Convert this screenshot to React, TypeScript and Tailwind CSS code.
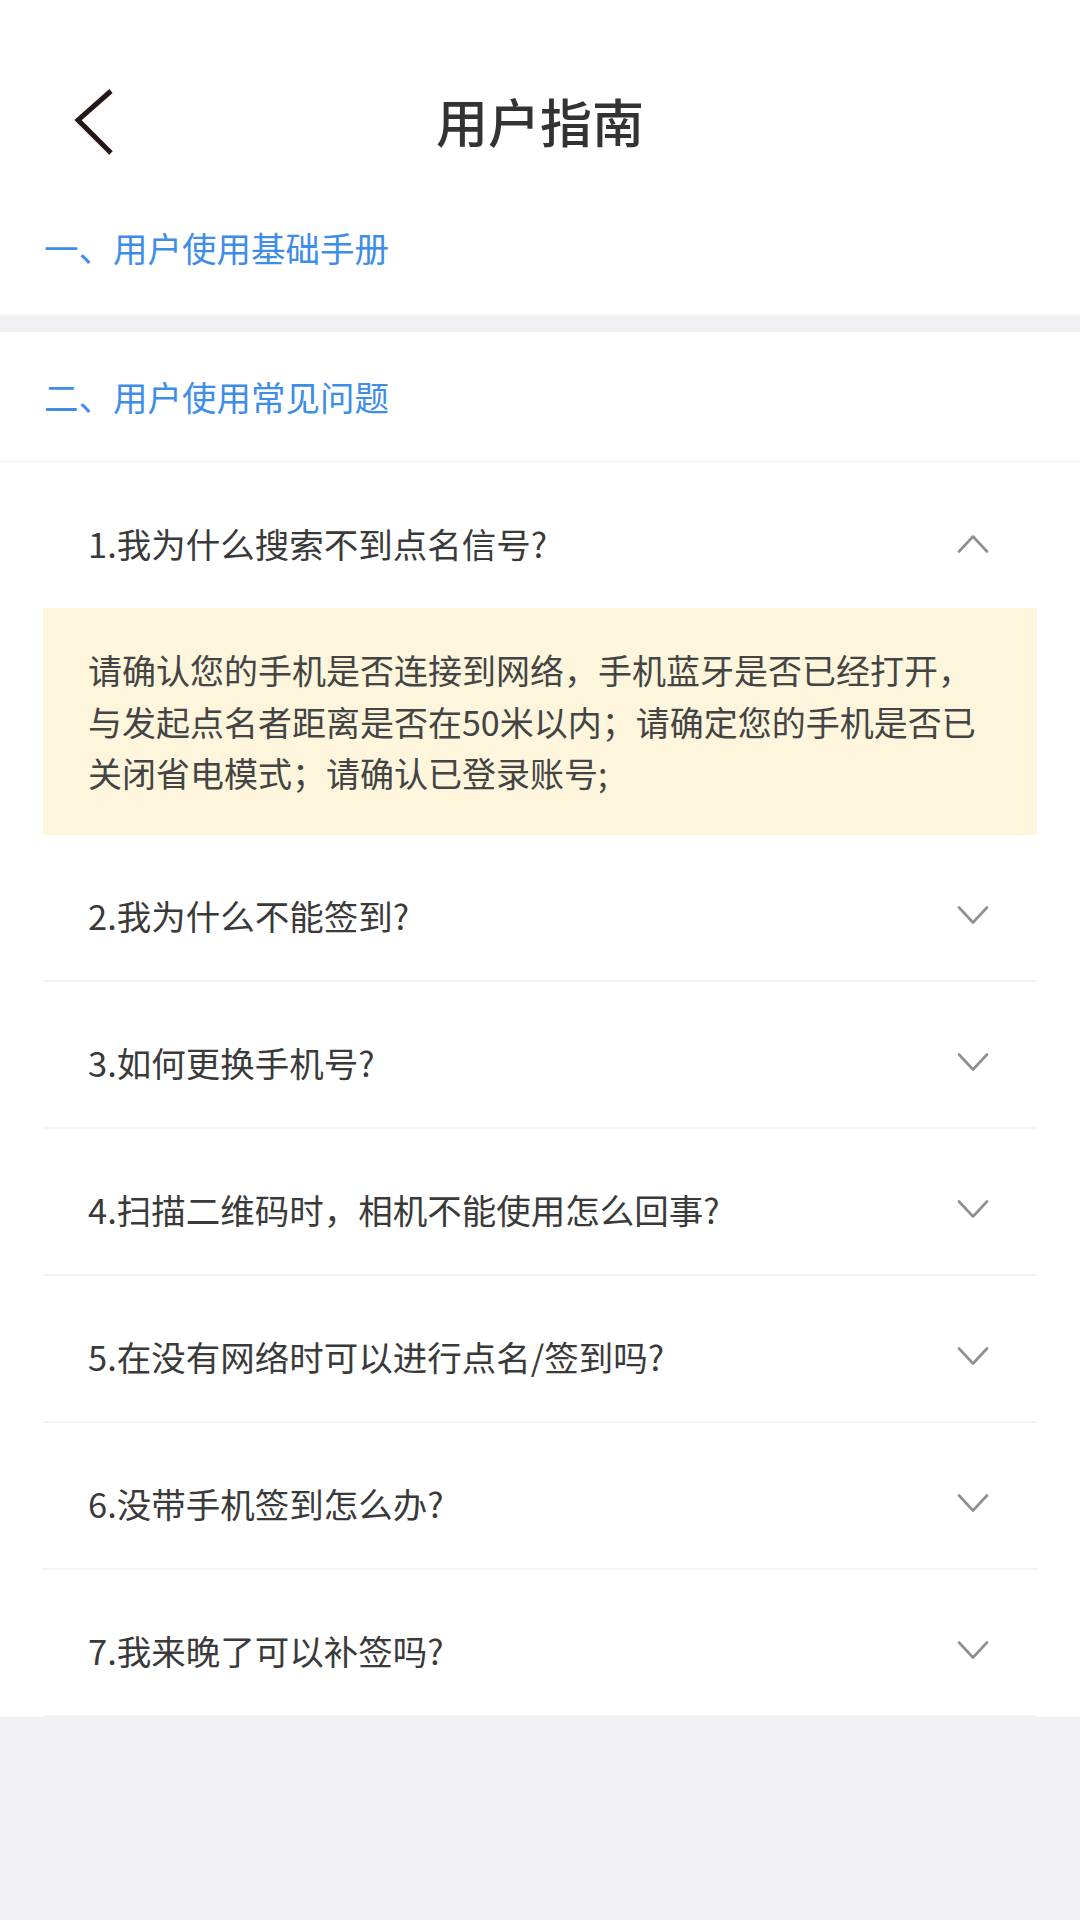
import React from "react";

const questions = [
  "1.我为什么搜索不到点名信号?",
  "2.我为什么不能签到?",
  "3.如何更换手机号?",
  "4.扫描二维码时，相机不能使用怎么回事?",
  "5.在没有网络时可以进行点名/签到吗?",
  "6.没带手机签到怎么办?",
  "7.我来晚了可以补签吗?",
];

function Chevron({ up }: { up?: boolean }) {
  return (
    <svg width="32" height="19" viewBox="0 0 32 19" className="shrink-0">
      <path
        d={up ? "M2 17.5 L16 2.5 L30 17.5" : "M2 1.5 L16 16.5 L30 1.5"}
        fill="none"
        stroke="#8f8f8f"
        strokeWidth="2.6"
        strokeLinecap="round"
        strokeLinejoin="round"
      />
    </svg>
  );
}

export default function App() {
  const font = { fontFamily: '"Noto Sans CJK SC", "Noto Sans", sans-serif' };
  return (
    <div className="w-[1080px] min-h-[1920px] bg-[#efeff4]" style={font}>
      {/* top white block */}
      <div className="bg-white">
        <div className="h-[183px] pt-[61px]">
          <div className="relative h-[120px] flex items-center justify-center">
            <svg
              width="44"
              height="66"
              viewBox="0 0 44 66"
              className="absolute left-[72px] top-[28px]"
            >
              <path
                d="M39 2 L6 31 L39 64"
                fill="none"
                stroke="#231815"
                strokeWidth="5"
                strokeLinejoin="miter"
              />
            </svg>
            <span className="text-[52px] font-medium text-[#333333] leading-none">用户指南</span>
          </div>
        </div>
        <div className="h-[131px] flex items-center pl-[44px] pb-[2px]">
          <span className="text-[34.5px] text-[#3e8ee8] leading-none">一、用户使用基础手册</span>
        </div>
      </div>
      <div className="h-[18px] border-t-2 border-[#f5f5f5] bg-[#efeff4]" />

      {/* FAQ block */}
      <div className="bg-white">
        <div className="h-[130px] flex items-center pl-[44px] border-b border-[#efefef]">
          <span className="text-[34.5px] text-[#3e8ee8] leading-none">二、用户使用常见问题</span>
        </div>
        <div className="mx-[43px]">
          {questions.map((q, i) => (
            <React.Fragment key={i}>
              <div
                className={
                  i === 0
                    ? "h-[146px] pt-[17px] flex items-center justify-between pl-[45px] pr-[48px]"
                    : "h-[147px] pt-[17px] flex items-center justify-between pl-[45px] pr-[48px] border-b-2 border-[#f4f4f4]"
                }
              >
                <span className="text-[34.5px] text-[#3a3a3a] leading-none">{q}</span>
                <Chevron up={i === 0} />
              </div>
              {i === 0 && (
                <div className="bg-[#fdf6dc] px-[45px] py-[36px]">
                  <p className="text-[34px] leading-[51.5px] text-[#444444]">
                    请确认您的手机是否连接到网络，手机蓝牙是否已经打开，与发起点名者距离是否在50米以内；请确定您的手机是否已关闭省电模式；请确认已登录账号;
                  </p>
                </div>
              )}
            </React.Fragment>
          ))}
        </div>
      </div>
    </div>
  );
}
